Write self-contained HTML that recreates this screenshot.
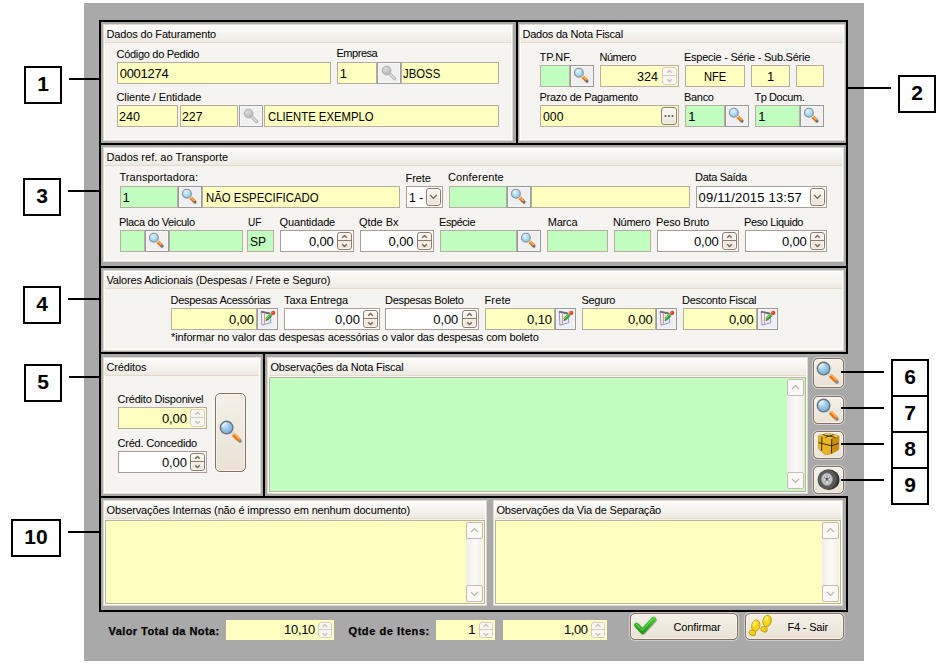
<!DOCTYPE html>
<html lang="pt-BR"><head><meta charset="utf-8"><title>Faturamento</title>
<style>
*{box-sizing:border-box;margin:0;padding:0}
html,body{width:942px;height:668px;overflow:hidden;background:#fff}
body{position:relative;font-family:"Liberation Sans",sans-serif;font-size:11px;color:#000}
.a{position:absolute}
#bg{left:84px;top:3px;width:780px;height:658px;background:#a9a9a9}
.k{position:absolute;background:#000}
.p{position:absolute;background:#f6f4f0;border:1px solid #e1d8c7;overflow:hidden}
.p:after{content:"";position:absolute;left:0;top:0;right:0;bottom:0;border:1px solid rgba(255,255,255,.85)}

.p .t{position:absolute;left:0;top:0;right:0;height:18px;background:linear-gradient(#fdfcfb,#f6f3ee 55%,#eeeae2);border-bottom:1px solid #e3dccb;padding-left:2.5px;line-height:18px;white-space:nowrap;font-size:11px;}
.l{position:absolute;white-space:nowrap;font-size:11px;line-height:13px;height:13px}
.f{position:absolute;height:22px;border:1px solid #b9ada3;font-size:13px;line-height:21px;padding-left:2px;white-space:nowrap;overflow:hidden}
.y{background:#ffffc0}.g{background:#c0ffc0}.w{background:#fff;border-color:#ab9d93}
.r{text-align:right}
.c{text-align:center;padding-left:0}
.sb{position:absolute;width:24px;height:22px;border:1px solid #989898;background:#efefef;box-shadow:inset 0 0 0 1px #f6f6f6}
.sb svg{position:absolute;left:0;top:0}
.sb.d{background:#f0f0f0;border-color:#a0a0a0}
.eb{position:absolute;width:21px;height:22px;border:1px solid #9a9a9a;background:#efefef;box-shadow:inset 0 0 0 1px #f6f6f6}
.eb svg{position:absolute;left:0;top:0}
.sp{position:absolute;width:15px;height:18px;border:1px solid #8f7b6d;border-radius:3px;background:linear-gradient(#faf8f3,#ece6d9);box-shadow:inset 0 0 0 1px rgba(255,255,255,.7)}
.sp:after{content:"";position:absolute;left:0;right:0;top:7px;height:1px;background:#8f7b6d}
.sp svg{position:absolute;left:0;top:0}
.sp.dis{border-color:#d3ccc2;background:#f8f6f2}
.sp.dis:after{background:#d3ccc2}
.sp[style*="height:16px"]:after{top:6px}
.dd{position:absolute;width:15px;height:18px;border:1px solid #8f7b6d;border-radius:3px;background:linear-gradient(#faf8f3,#e9e3d6);box-shadow:inset 0 0 0 1px rgba(255,255,255,.6)}
.dd svg{position:absolute;left:0;top:0}
.bb{position:absolute;border:1px solid #8a6e5e;border-radius:5px;background:linear-gradient(#f4f0e8,#e9e3d5);box-shadow:0 0 0 1px rgba(255,255,255,.42),inset 0 0 0 1px rgba(255,255,255,.5)}
.bb span{position:absolute;font-size:11px;line-height:13px;white-space:nowrap}
.nb{position:absolute;background:#fff;border:2px solid #000;font-family:"Liberation Sans",sans-serif;font-weight:bold;font-size:21px;text-align:center;color:#000}
.ln{position:absolute;height:2px;background:#000}
.ta{position:absolute;border:1px solid #bdb1a7}
.sc{position:absolute;width:17px;background:linear-gradient(90deg,#f0ede8,#fbfaf8 50%,#f3f0ea)}
.sc i{position:absolute;left:0;width:17px;height:17px;border:1px solid #c6b9b0;border-radius:2px;background:#faf9f7}
.sc i svg{position:absolute;left:0;top:0}
.bl{position:absolute;font-weight:bold;font-size:11px;white-space:nowrap;line-height:13px;-webkit-text-stroke:.25px #000}
</style></head>
<body>
<div class="a" id="bg"></div>
<div class="k" style="left:99px;top:20px;width:749px;height:2px"></div>
<div class="k" style="left:99px;top:143px;width:749px;height:2px"></div>
<div class="k" style="left:99px;top:266px;width:749px;height:2px"></div>
<div class="k" style="left:99px;top:352px;width:749px;height:2px"></div>
<div class="k" style="left:99px;top:496px;width:749px;height:2px"></div>
<div class="k" style="left:99px;top:610px;width:749px;height:2px"></div>
<div class="k" style="left:99px;top:20px;width:2px;height:592px"></div>
<div class="k" style="left:846px;top:20px;width:2px;height:334px"></div>
<div class="k" style="left:846px;top:496px;width:2px;height:116px"></div>
<div class="k" style="left:516px;top:20px;width:2px;height:125px"></div>
<div class="k" style="left:263px;top:352px;width:2px;height:146px"></div>
<div class="p" style="left:103px;top:24px;width:410px;height:117px"><div class="t"><span id="t1" style="letter-spacing:-0.148px">Dados do Faturamento</span></div></div>
<div class="l" style="left:116.5px;top:48px"><span id="t2" style="letter-spacing:-0.298px">Código do Pedido</span></div>
<div class="f y" style="left:117px;top:62px;width:214px;;padding-left:1.7px"><span id="t3" style="letter-spacing:-0.271px">0001274</span></div>
<div class="l" style="left:336.5px;top:47px"><span id="t4" style="letter-spacing:-0.464px">Empresa</span></div>
<div class="f y" style="left:337px;top:62px;width:40px;;padding-left:1.8px"><span id="t5">1</span></div>
<div class="sb d" style="left:377px;top:62px"><svg width="22" height="20" viewBox="0 0 22 20"><defs><radialGradient id="mgd" cx="38%" cy="32%" r="75%"><stop offset="0" stop-color="#dcdcdc"/><stop offset="1" stop-color="#b2b2b2"/></radialGradient></defs><path d="M11.8 10.9 L16.6 15.7" stroke="#b4b4b4" stroke-width="3.2" stroke-linecap="round"/><path d="M12 11.1 L16.4 15.5" stroke="#dedede" stroke-width="1.4" stroke-linecap="round"/><circle cx="8.6" cy="7.5" r="4.4" fill="url(#mgd)" stroke="#b0b0b0" stroke-width="1"/></svg></div>
<div class="f y" style="left:401px;top:62px;width:98px;;padding-left:0.8px"><span id="t6" style="display:inline-block;transform:scaleX(0.8739);transform-origin:0 50%">JBOSS</span></div>
<div class="l" style="left:116.5px;top:91px"><span id="t7" style="letter-spacing:-0.123px">Cliente / Entidade</span></div>
<div class="f y" style="left:117px;top:105px;width:61px;;padding-left:1.3px"><span id="t8" style="display:inline-block;transform:scaleX(0.9676);transform-origin:0 50%">240</span></div>
<div class="f y" style="left:180px;top:105px;width:58px;;padding-left:1.3px"><span id="t9" style="display:inline-block;transform:scaleX(0.9446);transform-origin:0 50%">227</span></div>
<div class="sb d" style="left:239px;top:105px"><svg width="22" height="20" viewBox="0 0 22 20"><defs><radialGradient id="mgd" cx="38%" cy="32%" r="75%"><stop offset="0" stop-color="#dcdcdc"/><stop offset="1" stop-color="#b2b2b2"/></radialGradient></defs><path d="M11.8 10.9 L16.6 15.7" stroke="#b4b4b4" stroke-width="3.2" stroke-linecap="round"/><path d="M12 11.1 L16.4 15.5" stroke="#dedede" stroke-width="1.4" stroke-linecap="round"/><circle cx="8.6" cy="7.5" r="4.4" fill="url(#mgd)" stroke="#b0b0b0" stroke-width="1"/></svg></div>
<div class="f y" style="left:264px;top:105px;width:235px;;padding-left:2.5px"><span id="t10" style="display:inline-block;transform:scaleX(0.8692);transform-origin:0 50%">CLIENTE EXEMPLO</span></div>
<div class="p" style="left:519px;top:24px;width:326px;height:117px"><div class="t"><span id="t11" style="letter-spacing:-0.235px">Dados da Nota Fiscal</span></div></div>
<div class="l" style="left:539.5px;top:51px"><span id="t12" style="letter-spacing:0.059px">TP.NF.</span></div>
<div class="f g" style="left:540px;top:65px;width:30px;"></div>
<div class="sb" style="left:570px;top:65px"><svg width="22" height="20" viewBox="0 0 22 20"><defs><radialGradient id="mg1" cx="38%" cy="32%" r="75%"><stop offset="0" stop-color="#e4f4fe"/><stop offset=".55" stop-color="#a9daf6"/><stop offset="1" stop-color="#7fbfe8"/></radialGradient></defs><path d="M14.8 13.9 L16 15.1" stroke="#707070" stroke-width="3.2" stroke-linecap="round"/><path d="M11.2 10.3 L15.2 14.3" stroke="#e8741c" stroke-width="3.4"/><path d="M11.6 9.9 L15.6 13.9" stroke="#ffc050" stroke-width="1.1"/><path d="M10.6 9.7 L11.8 10.9" stroke="#f4f4f4" stroke-width="3"/><circle cx="7.9" cy="6.7" r="4.4" fill="url(#mg1)" stroke="#8a9097" stroke-width="1.1"/></svg></div>
<div class="l" style="left:599.5px;top:51px"><span id="t13" style="letter-spacing:-0.475px">Número</span></div>
<div class="f y r" style="left:600px;top:65px;width:79px;padding-right:19px;padding-right:19.2px"><span id="t14" style="display:inline-block;transform:scaleX(0.9676);transform-origin:0 50%">324</span></div>
<div class="sp dis" style="left:662px;top:67px"><svg width="13" height="16" viewBox="0 0 13 16"><path d="M4.2 4.8 L6.5 2.5 L8.8 4.8" fill="none" stroke="#c9c2b8" stroke-width="1.4"/><path d="M4.2 11.2 L6.5 13.5 L8.8 11.2" fill="none" stroke="#c9c2b8" stroke-width="1.4"/></svg></div>
<div class="l" style="left:684.0px;top:51px"><span id="t15" style="letter-spacing:-0.247px">Especie - Série - Sub.Série</span></div>
<div class="f y c" style="left:685px;top:65px;width:60px;"><span id="t16" style="display:inline-block;transform:scaleX(0.8538);transform-origin:50% 50%">NFE</span></div>
<div class="f y c" style="left:751px;top:65px;width:39px;"><span id="t17">1</span></div>
<div class="f y" style="left:796px;top:65px;width:28px;"></div>
<div class="l" style="left:539.5px;top:91px"><span id="t18" style="letter-spacing:-0.271px">Prazo de Pagamento</span></div>
<div class="f y" style="left:540px;top:105px;width:139px;;padding-left:2.0px"><span id="t19" style="display:inline-block;transform:scaleX(0.9446);transform-origin:0 50%">000</span></div>
<div class="dd" style="left:661px;top:107px;width:16px;height:18px"><svg width="14" height="16" viewBox="0 0 14 16"><circle cx="3.5" cy="8" r="1" fill="#555"/><circle cx="7" cy="8" r="1" fill="#555"/><circle cx="10.5" cy="8" r="1" fill="#555"/></svg></div>
<div class="l" style="left:684.0px;top:91px"><span id="t20" style="letter-spacing:-0.301px">Banco</span></div>
<div class="f g" style="left:685px;top:105px;width:40px;;padding-left:2.3px"><span id="t21">1</span></div>
<div class="sb" style="left:725px;top:105px"><svg width="22" height="20" viewBox="0 0 22 20"><defs><radialGradient id="mg2" cx="38%" cy="32%" r="75%"><stop offset="0" stop-color="#e4f4fe"/><stop offset=".55" stop-color="#a9daf6"/><stop offset="1" stop-color="#7fbfe8"/></radialGradient></defs><path d="M14.8 13.9 L16 15.1" stroke="#707070" stroke-width="3.2" stroke-linecap="round"/><path d="M11.2 10.3 L15.2 14.3" stroke="#e8741c" stroke-width="3.4"/><path d="M11.6 9.9 L15.6 13.9" stroke="#ffc050" stroke-width="1.1"/><path d="M10.6 9.7 L11.8 10.9" stroke="#f4f4f4" stroke-width="3"/><circle cx="7.9" cy="6.7" r="4.4" fill="url(#mg2)" stroke="#8a9097" stroke-width="1.1"/></svg></div>
<div class="l" style="left:754.5px;top:91px"><span id="t22" style="letter-spacing:-0.443px">Tp Docum.</span></div>
<div class="f g" style="left:755px;top:105px;width:45px;;padding-left:2.3px"><span id="t23">1</span></div>
<div class="sb" style="left:800px;top:105px"><svg width="22" height="20" viewBox="0 0 22 20"><defs><radialGradient id="mg3" cx="38%" cy="32%" r="75%"><stop offset="0" stop-color="#e4f4fe"/><stop offset=".55" stop-color="#a9daf6"/><stop offset="1" stop-color="#7fbfe8"/></radialGradient></defs><path d="M14.8 13.9 L16 15.1" stroke="#707070" stroke-width="3.2" stroke-linecap="round"/><path d="M11.2 10.3 L15.2 14.3" stroke="#e8741c" stroke-width="3.4"/><path d="M11.6 9.9 L15.6 13.9" stroke="#ffc050" stroke-width="1.1"/><path d="M10.6 9.7 L11.8 10.9" stroke="#f4f4f4" stroke-width="3"/><circle cx="7.9" cy="6.7" r="4.4" fill="url(#mg3)" stroke="#8a9097" stroke-width="1.1"/></svg></div>
<div class="p" style="left:103px;top:147px;width:741px;height:115px"><div class="t"><span id="t24" style="letter-spacing:0.001px">Dados ref. ao Transporte</span></div></div>
<div class="l" style="left:119.5px;top:171px"><span id="t25" style="letter-spacing:0.046px">Transportadora:</span></div>
<div class="f g" style="left:120px;top:186px;width:58px;;padding-left:1.6px"><span id="t26">1</span></div>
<div class="sb" style="left:178px;top:186px"><svg width="22" height="20" viewBox="0 0 22 20"><defs><radialGradient id="mg4" cx="38%" cy="32%" r="75%"><stop offset="0" stop-color="#e4f4fe"/><stop offset=".55" stop-color="#a9daf6"/><stop offset="1" stop-color="#7fbfe8"/></radialGradient></defs><path d="M14.8 13.9 L16 15.1" stroke="#707070" stroke-width="3.2" stroke-linecap="round"/><path d="M11.2 10.3 L15.2 14.3" stroke="#e8741c" stroke-width="3.4"/><path d="M11.6 9.9 L15.6 13.9" stroke="#ffc050" stroke-width="1.1"/><path d="M10.6 9.7 L11.8 10.9" stroke="#f4f4f4" stroke-width="3"/><circle cx="7.9" cy="6.7" r="4.4" fill="url(#mg4)" stroke="#8a9097" stroke-width="1.1"/></svg></div>
<div class="f y" style="left:202px;top:186px;width:198px;;padding-left:2.6px"><span id="t27" style="display:inline-block;transform:scaleX(0.8765);transform-origin:0 50%">NÃO ESPECIFICADO</span></div>
<div class="l" style="left:405.5px;top:172px"><span id="t28" style="letter-spacing:-0.047px">Frete</span></div>
<div class="f w" style="left:406px;top:186px;width:37px;;padding-left:2.0px"><span id="t29" style="display:inline-block;transform:scaleX(0.9392);transform-origin:0 50%">1 -</span></div>
<div class="dd" style="left:426px;top:188px"><svg width="13" height="16" viewBox="0 0 13 16"><path d="M3.2 6 L6.5 9.4 L9.8 6" fill="none" stroke="#7a6658" stroke-width="1.3"/></svg></div>
<div class="l" style="left:448.0px;top:171px"><span id="t30" style="letter-spacing:0.146px">Conferente</span></div>
<div class="f g" style="left:449px;top:186px;width:58px;"></div>
<div class="sb" style="left:507px;top:186px"><svg width="22" height="20" viewBox="0 0 22 20"><defs><radialGradient id="mg5" cx="38%" cy="32%" r="75%"><stop offset="0" stop-color="#e4f4fe"/><stop offset=".55" stop-color="#a9daf6"/><stop offset="1" stop-color="#7fbfe8"/></radialGradient></defs><path d="M14.8 13.9 L16 15.1" stroke="#707070" stroke-width="3.2" stroke-linecap="round"/><path d="M11.2 10.3 L15.2 14.3" stroke="#e8741c" stroke-width="3.4"/><path d="M11.6 9.9 L15.6 13.9" stroke="#ffc050" stroke-width="1.1"/><path d="M10.6 9.7 L11.8 10.9" stroke="#f4f4f4" stroke-width="3"/><circle cx="7.9" cy="6.7" r="4.4" fill="url(#mg5)" stroke="#8a9097" stroke-width="1.1"/></svg></div>
<div class="f y" style="left:531px;top:186px;width:159px;"></div>
<div class="l" style="left:695.0px;top:171px"><span id="t31" style="letter-spacing:-0.311px">Data Saída</span></div>
<div class="f w" style="left:696px;top:186px;width:131px;;padding-left:1.6px"><span id="t32" style="letter-spacing:0.200px">09/11/2015 13:57</span></div>
<div class="dd" style="left:810px;top:188px"><svg width="13" height="16" viewBox="0 0 13 16"><path d="M3.2 6 L6.5 9.4 L9.8 6" fill="none" stroke="#7a6658" stroke-width="1.3"/></svg></div>
<div class="l" style="left:119.0px;top:216px"><span id="t33" style="letter-spacing:-0.356px">Placa do Veiculo</span></div>
<div class="f g" style="left:120px;top:230px;width:25px;"></div>
<div class="sb" style="left:145px;top:230px"><svg width="22" height="20" viewBox="0 0 22 20"><defs><radialGradient id="mg6" cx="38%" cy="32%" r="75%"><stop offset="0" stop-color="#e4f4fe"/><stop offset=".55" stop-color="#a9daf6"/><stop offset="1" stop-color="#7fbfe8"/></radialGradient></defs><path d="M14.8 13.9 L16 15.1" stroke="#707070" stroke-width="3.2" stroke-linecap="round"/><path d="M11.2 10.3 L15.2 14.3" stroke="#e8741c" stroke-width="3.4"/><path d="M11.6 9.9 L15.6 13.9" stroke="#ffc050" stroke-width="1.1"/><path d="M10.6 9.7 L11.8 10.9" stroke="#f4f4f4" stroke-width="3"/><circle cx="7.9" cy="6.7" r="4.4" fill="url(#mg6)" stroke="#8a9097" stroke-width="1.1"/></svg></div>
<div class="f g" style="left:169px;top:230px;width:74px;"></div>
<div class="l" style="left:248.0px;top:216px"><span id="t34" style="display:inline-block;transform:scaleX(0.9201);transform-origin:0 50%">UF</span></div>
<div class="f g" style="left:247px;top:230px;width:27px;;padding-left:1.8px"><span id="t35" style="display:inline-block;transform:scaleX(0.9225);transform-origin:0 50%">SP</span></div>
<div class="l" style="left:279.5px;top:216px"><span id="t36" style="letter-spacing:-0.127px">Quantidade</span></div>
<div class="f w r" style="left:280px;top:230px;width:74px;padding-right:19px;padding-right:19.5px"><span id="t37" style="letter-spacing:-0.188px">0,00</span></div>
<div class="sp" style="left:337px;top:232px"><svg width="13" height="16" viewBox="0 0 13 16"><path d="M4.2 4.8 L6.5 2.5 L8.8 4.8" fill="none" stroke="#7a6658" stroke-width="1.4"/><path d="M4.2 11.2 L6.5 13.5 L8.8 11.2" fill="none" stroke="#7a6658" stroke-width="1.4"/></svg></div>
<div class="l" style="left:359.0px;top:216px"><span id="t38" style="letter-spacing:-0.042px">Qtde Bx</span></div>
<div class="f w r" style="left:360px;top:230px;width:74px;padding-right:19px;padding-right:19.5px"><span id="t39" style="letter-spacing:-0.104px">0,00</span></div>
<div class="sp" style="left:417px;top:232px"><svg width="13" height="16" viewBox="0 0 13 16"><path d="M4.2 4.8 L6.5 2.5 L8.8 4.8" fill="none" stroke="#7a6658" stroke-width="1.4"/><path d="M4.2 11.2 L6.5 13.5 L8.8 11.2" fill="none" stroke="#7a6658" stroke-width="1.4"/></svg></div>
<div class="l" style="left:439.0px;top:216px"><span id="t40" style="letter-spacing:-0.440px">Espécie</span></div>
<div class="f g" style="left:440px;top:230px;width:77px;"></div>
<div class="sb" style="left:517px;top:230px"><svg width="22" height="20" viewBox="0 0 22 20"><defs><radialGradient id="mg7" cx="38%" cy="32%" r="75%"><stop offset="0" stop-color="#e4f4fe"/><stop offset=".55" stop-color="#a9daf6"/><stop offset="1" stop-color="#7fbfe8"/></radialGradient></defs><path d="M14.8 13.9 L16 15.1" stroke="#707070" stroke-width="3.2" stroke-linecap="round"/><path d="M11.2 10.3 L15.2 14.3" stroke="#e8741c" stroke-width="3.4"/><path d="M11.6 9.9 L15.6 13.9" stroke="#ffc050" stroke-width="1.1"/><path d="M10.6 9.7 L11.8 10.9" stroke="#f4f4f4" stroke-width="3"/><circle cx="7.9" cy="6.7" r="4.4" fill="url(#mg7)" stroke="#8a9097" stroke-width="1.1"/></svg></div>
<div class="l" style="left:547.75px;top:216px"><span id="t41" style="letter-spacing:-0.203px">Marca</span></div>
<div class="f g" style="left:547px;top:230px;width:61px;"></div>
<div class="l" style="left:613.0px;top:216px"><span id="t42" style="letter-spacing:-0.325px">Número</span></div>
<div class="f g" style="left:614px;top:230px;width:37px;"></div>
<div class="l" style="left:656.0px;top:216px"><span id="t43" style="letter-spacing:-0.158px">Peso Bruto</span></div>
<div class="f w r" style="left:657px;top:230px;width:82px;padding-right:19px;padding-right:19.5px"><span id="t44" style="letter-spacing:-0.188px">0,00</span></div>
<div class="sp" style="left:722px;top:232px"><svg width="13" height="16" viewBox="0 0 13 16"><path d="M4.2 4.8 L6.5 2.5 L8.8 4.8" fill="none" stroke="#7a6658" stroke-width="1.4"/><path d="M4.2 11.2 L6.5 13.5 L8.8 11.2" fill="none" stroke="#7a6658" stroke-width="1.4"/></svg></div>
<div class="l" style="left:744.0px;top:216px"><span id="t45" style="letter-spacing:-0.374px">Peso Liquido</span></div>
<div class="f w r" style="left:745px;top:230px;width:82px;padding-right:19px;padding-right:19.5px"><span id="t46" style="letter-spacing:-0.188px">0,00</span></div>
<div class="sp" style="left:810px;top:232px"><svg width="13" height="16" viewBox="0 0 13 16"><path d="M4.2 4.8 L6.5 2.5 L8.8 4.8" fill="none" stroke="#7a6658" stroke-width="1.4"/><path d="M4.2 11.2 L6.5 13.5 L8.8 11.2" fill="none" stroke="#7a6658" stroke-width="1.4"/></svg></div>
<div class="p" style="left:103px;top:270px;width:741px;height:81px"><div class="t"><span id="t47" style="letter-spacing:-0.155px">Valores Adicionais (Despesas / Frete e Seguro)</span></div></div>
<div class="l" style="left:170.5px;top:294px"><span id="t48" style="letter-spacing:-0.273px">Despesas Acessórias</span></div>
<div class="f y r" style="left:171px;top:308px;width:86px;;padding-right:2.0px"><span id="t49" style="letter-spacing:-0.104px">0,00</span></div>
<div class="eb" style="left:257px;top:308px"><svg width="19" height="20" viewBox="0 0 19 20"><path d="M3.2 2.9 L11.6 4.6 L12.9 13.6 L4 16.1 Z" fill="#f2f6fd" stroke="#8c92cc" stroke-width="1"/><path d="M8 5 L11.2 5.6 L12.2 13 L8 14.2 Z" fill="#dfe9f8"/><path d="M3.1 2.7 L11.8 4.5" stroke="#6c6c74" stroke-width="1.8"/><path d="M6.4 4.4 L6.4 14.8" stroke="#f08060" stroke-width="1"/><path d="M8.6 10.4 L13 5.8" stroke="#2e9a2e" stroke-width="3.4"/><path d="M8.4 9.6 L12.6 5.2" stroke="#7fe06a" stroke-width="1.2"/><path d="M7.6 11.9 L8.2 10 L9.6 11.2 Z" fill="#4a3a2a"/><path d="M13 5.8 L14 4.8" stroke="#9a9a9a" stroke-width="3"/><circle cx="15.2" cy="3.9" r="2.1" fill="#e8401c"/><circle cx="14.7" cy="3.3" r=".8" fill="#ff8a60"/></svg></div>
<div class="l" style="left:284.0px;top:294px"><span id="t50" style="letter-spacing:-0.053px">Taxa Entrega</span></div>
<div class="f w r" style="left:284px;top:308px;width:96px;padding-right:19px;padding-right:19.2px"><span id="t51" style="letter-spacing:-0.104px">0,00</span></div>
<div class="sp" style="left:363px;top:310px"><svg width="13" height="16" viewBox="0 0 13 16"><path d="M4.2 4.8 L6.5 2.5 L8.8 4.8" fill="none" stroke="#7a6658" stroke-width="1.4"/><path d="M4.2 11.2 L6.5 13.5 L8.8 11.2" fill="none" stroke="#7a6658" stroke-width="1.4"/></svg></div>
<div class="l" style="left:385.0px;top:294px"><span id="t52" style="letter-spacing:-0.298px">Despesas Boleto</span></div>
<div class="f w r" style="left:385px;top:308px;width:94px;padding-right:19px;padding-right:19.8px"><span id="t53" style="letter-spacing:-0.104px">0,00</span></div>
<div class="sp" style="left:462px;top:310px"><svg width="13" height="16" viewBox="0 0 13 16"><path d="M4.2 4.8 L6.5 2.5 L8.8 4.8" fill="none" stroke="#7a6658" stroke-width="1.4"/><path d="M4.2 11.2 L6.5 13.5 L8.8 11.2" fill="none" stroke="#7a6658" stroke-width="1.4"/></svg></div>
<div class="l" style="left:484.5px;top:294px"><span id="t54" style="letter-spacing:0.141px">Frete</span></div>
<div class="f y r" style="left:485px;top:308px;width:70px;;padding-right:2.0px"><span id="t55" style="letter-spacing:-0.104px">0,10</span></div>
<div class="eb" style="left:555px;top:308px"><svg width="19" height="20" viewBox="0 0 19 20"><path d="M3.2 2.9 L11.6 4.6 L12.9 13.6 L4 16.1 Z" fill="#f2f6fd" stroke="#8c92cc" stroke-width="1"/><path d="M8 5 L11.2 5.6 L12.2 13 L8 14.2 Z" fill="#dfe9f8"/><path d="M3.1 2.7 L11.8 4.5" stroke="#6c6c74" stroke-width="1.8"/><path d="M6.4 4.4 L6.4 14.8" stroke="#f08060" stroke-width="1"/><path d="M8.6 10.4 L13 5.8" stroke="#2e9a2e" stroke-width="3.4"/><path d="M8.4 9.6 L12.6 5.2" stroke="#7fe06a" stroke-width="1.2"/><path d="M7.6 11.9 L8.2 10 L9.6 11.2 Z" fill="#4a3a2a"/><path d="M13 5.8 L14 4.8" stroke="#9a9a9a" stroke-width="3"/><circle cx="15.2" cy="3.9" r="2.1" fill="#e8401c"/><circle cx="14.7" cy="3.3" r=".8" fill="#ff8a60"/></svg></div>
<div class="l" style="left:581.5px;top:294px"><span id="t56" style="letter-spacing:-0.297px">Seguro</span></div>
<div class="f y r" style="left:582px;top:308px;width:74px;;padding-right:2.5px"><span id="t57" style="letter-spacing:-0.188px">0,00</span></div>
<div class="eb" style="left:656px;top:308px"><svg width="19" height="20" viewBox="0 0 19 20"><path d="M3.2 2.9 L11.6 4.6 L12.9 13.6 L4 16.1 Z" fill="#f2f6fd" stroke="#8c92cc" stroke-width="1"/><path d="M8 5 L11.2 5.6 L12.2 13 L8 14.2 Z" fill="#dfe9f8"/><path d="M3.1 2.7 L11.8 4.5" stroke="#6c6c74" stroke-width="1.8"/><path d="M6.4 4.4 L6.4 14.8" stroke="#f08060" stroke-width="1"/><path d="M8.6 10.4 L13 5.8" stroke="#2e9a2e" stroke-width="3.4"/><path d="M8.4 9.6 L12.6 5.2" stroke="#7fe06a" stroke-width="1.2"/><path d="M7.6 11.9 L8.2 10 L9.6 11.2 Z" fill="#4a3a2a"/><path d="M13 5.8 L14 4.8" stroke="#9a9a9a" stroke-width="3"/><circle cx="15.2" cy="3.9" r="2.1" fill="#e8401c"/><circle cx="14.7" cy="3.3" r=".8" fill="#ff8a60"/></svg></div>
<div class="l" style="left:682.0px;top:294px"><span id="t58" style="letter-spacing:-0.269px">Desconto Fiscal</span></div>
<div class="f y r" style="left:683px;top:308px;width:74px;;padding-right:2.5px"><span id="t59" style="letter-spacing:-0.188px">0,00</span></div>
<div class="eb" style="left:757px;top:308px"><svg width="19" height="20" viewBox="0 0 19 20"><path d="M3.2 2.9 L11.6 4.6 L12.9 13.6 L4 16.1 Z" fill="#f2f6fd" stroke="#8c92cc" stroke-width="1"/><path d="M8 5 L11.2 5.6 L12.2 13 L8 14.2 Z" fill="#dfe9f8"/><path d="M3.1 2.7 L11.8 4.5" stroke="#6c6c74" stroke-width="1.8"/><path d="M6.4 4.4 L6.4 14.8" stroke="#f08060" stroke-width="1"/><path d="M8.6 10.4 L13 5.8" stroke="#2e9a2e" stroke-width="3.4"/><path d="M8.4 9.6 L12.6 5.2" stroke="#7fe06a" stroke-width="1.2"/><path d="M7.6 11.9 L8.2 10 L9.6 11.2 Z" fill="#4a3a2a"/><path d="M13 5.8 L14 4.8" stroke="#9a9a9a" stroke-width="3"/><circle cx="15.2" cy="3.9" r="2.1" fill="#e8401c"/><circle cx="14.7" cy="3.3" r=".8" fill="#ff8a60"/></svg></div>
<div class="l" style="left:171.0px;top:331px"><span id="t60" style="letter-spacing:-0.130px">*informar no valor das despesas acessórias o valor das despesas com boleto</span></div>
<div class="p" style="left:103px;top:357px;width:158px;height:137px"><div class="t"><span id="t61" style="letter-spacing:-0.146px">Créditos</span></div></div>
<div class="l" style="left:117.5px;top:393px"><span id="t62" style="letter-spacing:-0.192px">Crédito Disponivel</span></div>
<div class="f y r" style="left:118px;top:407px;width:89px;padding-right:19px;padding-right:19.2px"><span id="t63" style="letter-spacing:-0.104px">0,00</span></div>
<div class="sp dis" style="left:190px;top:409px"><svg width="13" height="16" viewBox="0 0 13 16"><path d="M4.2 4.8 L6.5 2.5 L8.8 4.8" fill="none" stroke="#c9c2b8" stroke-width="1.4"/><path d="M4.2 11.2 L6.5 13.5 L8.8 11.2" fill="none" stroke="#c9c2b8" stroke-width="1.4"/></svg></div>
<div class="l" style="left:117.5px;top:437px"><span id="t64" style="letter-spacing:-0.201px">Créd. Concedido</span></div>
<div class="f w r" style="left:118px;top:451px;width:89px;padding-right:19px;padding-right:19.2px"><span id="t65" style="letter-spacing:-0.104px">0,00</span></div>
<div class="sp" style="left:190px;top:453px"><svg width="13" height="16" viewBox="0 0 13 16"><path d="M4.2 4.8 L6.5 2.5 L8.8 4.8" fill="none" stroke="#7a6658" stroke-width="1.4"/><path d="M4.2 11.2 L6.5 13.5 L8.8 11.2" fill="none" stroke="#7a6658" stroke-width="1.4"/></svg></div>
<div class="bb" style="left:215px;top:393px;width:31px;height:79px"><svg style="position:absolute;left:2.5px;top:25.5px" width="24" height="24" viewBox="0 0 24 24"><defs><radialGradient id="mg8" cx="36%" cy="30%" r="80%"><stop offset="0" stop-color="#d6ebfa"/><stop offset=".5" stop-color="#94c6e8"/><stop offset="1" stop-color="#6aa6d2"/></radialGradient></defs><path d="M19.6 19.6 L21 21" stroke="#8a8a8a" stroke-width="3.6" stroke-linecap="round"/><path d="M14.2 14.2 L20 20" stroke="#ee7416" stroke-width="4.2"/><path d="M14.9 13.5 L20.7 19.3" stroke="#ffc04e" stroke-width="1.3"/><path d="M12.4 12.4 L14.4 14.4" stroke="#d8d8d8" stroke-width="3.8"/><circle cx="7.6" cy="7.6" r="6.3" fill="url(#mg8)" stroke="#6c747c" stroke-width="1.4"/><path d="M3.6 6.6 A4.4 4.4 0 0 1 7 3.2" fill="none" stroke="#f4fbff" stroke-width="1.2" stroke-linecap="round" opacity=".8"/></svg></div>
<div class="p" style="left:267px;top:357px;width:541px;height:137px"><div class="t"><span id="t66" style="letter-spacing:-0.199px">Observações da Nota Fiscal</span></div></div>
<div class="ta g" style="left:269px;top:377px;width:537px;height:115px"></div>
<div class="sc" style="left:787px;top:379px;height:110px"><i style="top:0"><svg width="15" height="15" viewBox="0 0 15 15"><path d="M4 9 L7.5 5.5 L11 9" fill="none" stroke="#b8b2a8" stroke-width="1.1"/></svg></i><i style="bottom:0"><svg width="15" height="15" viewBox="0 0 15 15"><path d="M4 6 L7.5 9.5 L11 6" fill="none" stroke="#b8b2a8" stroke-width="1.1"/></svg></i></div>
<div class="bb" style="left:813px;top:358px;width:31px;height:30px"><svg style="position:absolute;left:2.4px;top:2.4px" width="24" height="24" viewBox="0 0 24 24"><defs><radialGradient id="mg9" cx="36%" cy="30%" r="80%"><stop offset="0" stop-color="#d6ebfa"/><stop offset=".5" stop-color="#94c6e8"/><stop offset="1" stop-color="#6aa6d2"/></radialGradient></defs><path d="M19.6 19.6 L21 21" stroke="#8a8a8a" stroke-width="3.6" stroke-linecap="round"/><path d="M14.2 14.2 L20 20" stroke="#ee7416" stroke-width="4.2"/><path d="M14.9 13.5 L20.7 19.3" stroke="#ffc04e" stroke-width="1.3"/><path d="M12.4 12.4 L14.4 14.4" stroke="#d8d8d8" stroke-width="3.8"/><circle cx="7.6" cy="7.6" r="6.3" fill="url(#mg9)" stroke="#6c747c" stroke-width="1.4"/><path d="M3.6 6.6 A4.4 4.4 0 0 1 7 3.2" fill="none" stroke="#f4fbff" stroke-width="1.2" stroke-linecap="round" opacity=".8"/></svg></div>
<div class="bb" style="left:813px;top:396px;width:31px;height:28px"><svg style="position:absolute;left:2.4px;top:1px" width="24" height="24" viewBox="0 0 24 24"><defs><radialGradient id="mg10" cx="36%" cy="30%" r="80%"><stop offset="0" stop-color="#d6ebfa"/><stop offset=".5" stop-color="#94c6e8"/><stop offset="1" stop-color="#6aa6d2"/></radialGradient></defs><path d="M19.6 19.6 L21 21" stroke="#8a8a8a" stroke-width="3.6" stroke-linecap="round"/><path d="M14.2 14.2 L20 20" stroke="#ee7416" stroke-width="4.2"/><path d="M14.9 13.5 L20.7 19.3" stroke="#ffc04e" stroke-width="1.3"/><path d="M12.4 12.4 L14.4 14.4" stroke="#d8d8d8" stroke-width="3.8"/><circle cx="7.6" cy="7.6" r="6.3" fill="url(#mg10)" stroke="#6c747c" stroke-width="1.4"/><path d="M3.6 6.6 A4.4 4.4 0 0 1 7 3.2" fill="none" stroke="#f4fbff" stroke-width="1.2" stroke-linecap="round" opacity=".8"/></svg></div>
<div class="bb" style="left:813px;top:431px;width:31px;height:28px"><svg style="position:absolute;left:0;top:0" width="31" height="28" viewBox="0 0 31 28"><g transform="translate(-1,-1)" stroke-linejoin="round"><path d="M5.4 5.2 Q5.2 4.4 6.4 4.2 L14.6 2.4 Q15.4 2.2 16.4 2.5 L25.2 4.6 Q26.2 4.9 26.1 5.8 L25.7 17.8 Q25.6 18.8 24.8 19.2 L19.4 22.2 Q18.4 22.8 17.4 22.9 L13.2 23.6 Q12.2 23.7 11.4 23 L6.3 18.4 Q5.7 17.8 5.7 17 Z" fill="#d49a10" stroke="#b07c08" stroke-width=".6"/><path d="M5.5 4.8 L15.3 2.4 L26 5 L18.8 7.8 Z" fill="#f6d248"/><path d="M5.5 4.8 L18.8 7.8 L18.3 22.6 L12.4 23.6 L5.8 17.6 Z" fill="#eab420"/><path d="M18.8 7.8 L26 5 L25.6 18.4 L18.3 22.6 Z" fill="#c98e0c"/><g fill="none" stroke="#2a2208" stroke-width=".9"><path d="M8.9 5.6 L8.6 19.8"/><path d="M5.5 11.6 L18.6 14.8 L25.8 12.3"/><path d="M18.8 7.8 L18.4 22.4"/><path d="M10 3.8 L22.4 6.5"/><path d="M20.6 3.7 L12.2 6.4"/></g></g></svg></div>
<div class="bb" style="left:813px;top:466px;width:31px;height:28px"><svg style="position:absolute;left:0;top:0" width="31" height="28" viewBox="0 0 31 28"><defs><radialGradient id="tg" cx="42%" cy="45%" r="60%"><stop offset="0" stop-color="#6a6a6a"/><stop offset=".7" stop-color="#4a4a4a"/><stop offset="1" stop-color="#2c2c2c"/></radialGradient></defs><g transform="translate(-1,-1)"><ellipse cx="15.6" cy="13.7" rx="10.9" ry="10.4" fill="url(#tg)"/><ellipse cx="14.2" cy="13.4" rx="8.2" ry="9.2" fill="#555" stroke="#6e6e6e" stroke-width=".6"/><ellipse cx="14" cy="13.3" rx="5.6" ry="6.4" fill="#c4c4c4" stroke="#8c8c8c" stroke-width=".8"/><ellipse cx="14" cy="13.3" rx="3.4" ry="4" fill="#e4e4e4" stroke="#9a9a9a" stroke-width=".5"/><g stroke="#6a6a6a" stroke-width=".9"><path d="M14 13.3 L14 9.6"/><path d="M14 13.3 L17 11.4"/><path d="M14 13.3 L16.4 16"/><path d="M14 13.3 L11.8 16.2"/><path d="M14 13.3 L11 11.4"/></g><ellipse cx="14" cy="13.3" rx="1.2" ry="1.4" fill="#555"/></g></svg></div>
<div class="p" style="left:103px;top:500px;width:384px;height:106px"><div class="t"><span id="t67" style="letter-spacing:-0.145px">Observações Internas (não é impresso em nenhum documento)</span></div></div>
<div class="ta y" style="left:105px;top:520px;width:380px;height:84px"></div>
<div class="sc" style="left:466px;top:522px;height:80px"><i style="top:0"><svg width="15" height="15" viewBox="0 0 15 15"><path d="M4 9 L7.5 5.5 L11 9" fill="none" stroke="#b8b2a8" stroke-width="1.1"/></svg></i><i style="bottom:0"><svg width="15" height="15" viewBox="0 0 15 15"><path d="M4 6 L7.5 9.5 L11 6" fill="none" stroke="#b8b2a8" stroke-width="1.1"/></svg></i></div>
<div class="p" style="left:493px;top:500px;width:350px;height:106px"><div class="t"><span id="t68" style="letter-spacing:-0.191px">Observações da Via de Separação</span></div></div>
<div class="ta y" style="left:495px;top:520px;width:346px;height:84px"></div>
<div class="sc" style="left:822px;top:522px;height:80px"><i style="top:0"><svg width="15" height="15" viewBox="0 0 15 15"><path d="M4 9 L7.5 5.5 L11 9" fill="none" stroke="#b8b2a8" stroke-width="1.1"/></svg></i><i style="bottom:0"><svg width="15" height="15" viewBox="0 0 15 15"><path d="M4 6 L7.5 9.5 L11 6" fill="none" stroke="#b8b2a8" stroke-width="1.1"/></svg></i></div>
<div class="bl" style="left:108.5px;top:625px"><span id="t69" style="letter-spacing:0.435px">Valor Total da Nota:</span></div>
<div class="f y r" style="left:226px;top:620px;width:108px;border:0;height:20px;line-height:20px;padding-right:19.0px"><span id="t70" style="letter-spacing:-0.324px">10,10</span></div>
<div class="sp dis" style="left:318px;top:622px;height:16px;width:14px"><svg width="12" height="14" viewBox="0.5 1 12 14"><path d="M4.2 4.8 L6.5 2.5 L8.8 4.8" fill="none" stroke="#c9c2b8" stroke-width="1.3"/><path d="M4.2 11.2 L6.5 13.5 L8.8 11.2" fill="none" stroke="#c9c2b8" stroke-width="1.3"/></svg></div>
<div class="bl" style="left:348.5px;top:625px"><span id="t71" style="letter-spacing:0.570px">Qtde de Itens:</span></div>
<div class="f y r" style="left:436px;top:620px;width:59px;border:0;height:20px;line-height:20px;padding-right:19.5px"><span id="t72">1</span></div>
<div class="sp dis" style="left:479px;top:622px;height:16px;width:14px"><svg width="12" height="14" viewBox="0.5 1 12 14"><path d="M4.2 4.8 L6.5 2.5 L8.8 4.8" fill="none" stroke="#c9c2b8" stroke-width="1.3"/><path d="M4.2 11.2 L6.5 13.5 L8.8 11.2" fill="none" stroke="#c9c2b8" stroke-width="1.3"/></svg></div>
<div class="f y r" style="left:503px;top:620px;width:104px;border:0;height:20px;line-height:20px;padding-right:19.5px"><span id="t73" style="letter-spacing:-0.438px">1,00</span></div>
<div class="sp dis" style="left:591px;top:622px;height:16px;width:14px"><svg width="12" height="14" viewBox="0.5 1 12 14"><path d="M4.2 4.8 L6.5 2.5 L8.8 4.8" fill="none" stroke="#c9c2b8" stroke-width="1.3"/><path d="M4.2 11.2 L6.5 13.5 L8.8 11.2" fill="none" stroke="#c9c2b8" stroke-width="1.3"/></svg></div>
<div class="bb" style="left:630px;top:613px;width:108px;height:27px"><svg style="position:absolute;left:-1px;top:-1px" width="32" height="27" viewBox="0 0 32 27"><defs><linearGradient id="ck" x1="0" y1="0" x2="0" y2="1"><stop offset="0" stop-color="#4cc83a"/><stop offset="1" stop-color="#1f9a14"/></linearGradient></defs><path d="M7.3 12.9 L13.1 19.2 L24.2 7" fill="none" stroke="#5a6a50" stroke-opacity=".55" stroke-width="5.2" stroke-linecap="round" stroke-linejoin="round"/><path d="M6.5 12.1 L12.4 18.4 L23.5 6.2" fill="none" stroke="url(#ck)" stroke-width="5" stroke-linecap="round" stroke-linejoin="round"/><path d="M6.3 11.3 L12.3 17.4 L23 5.6" fill="none" stroke="#8ae878" stroke-opacity=".55" stroke-width="1.2" stroke-linecap="round" stroke-linejoin="round"/></svg><span style="left:42.5px;top:7px"><span id="t74" style="letter-spacing:-0.131px">Confirmar</span></span></div>
<div class="bb" style="left:745px;top:613px;width:99px;height:27px"><svg style="position:absolute;left:-1px;top:-1px" width="32" height="27" viewBox="0 0 32 27"><g fill="#6a5a10" fill-opacity=".5"><ellipse cx="10.9" cy="12.9" rx="3.9" ry="5.6" transform="rotate(14 10.9 12.9)"/><ellipse cx="8" cy="20.7" rx="3" ry="2.3" transform="rotate(14 8 20.7)"/><ellipse cx="22.6" cy="8.2" rx="3.9" ry="5.6" transform="rotate(14 22.6 8.2)"/><ellipse cx="19.6" cy="17" rx="3" ry="2.3" transform="rotate(14 19.6 17)"/></g><g fill="#f6d414" stroke="#c09a04" stroke-width=".8"><ellipse cx="10.8" cy="12.6" rx="4.1" ry="5.7" transform="rotate(14 10.8 12.6)"/><ellipse cx="7.3" cy="19.7" rx="3.3" ry="2.6" transform="rotate(14 7.3 19.7)"/><ellipse cx="22" cy="7.8" rx="4.1" ry="5.7" transform="rotate(14 22 7.8)"/><ellipse cx="19" cy="16.2" rx="3.3" ry="2.6" transform="rotate(14 19 16.2)"/></g><g fill="#fff27a" fill-opacity=".8"><ellipse cx="9.6" cy="10.6" rx="1.8" ry="3" transform="rotate(14 9.6 10.6)"/><ellipse cx="21.3" cy="5.9" rx="1.8" ry="3" transform="rotate(14 21.3 5.9)"/></g></svg><span style="left:41.5px;top:7px"><span id="t75" style="letter-spacing:-0.186px">F4 - Sair</span></span></div>
<div class="nb" style="left:24px;top:66px;width:38px;height:38px;line-height:32px">1</div>
<div class="ln" style="left:69px;top:78px;width:30px"></div>
<div class="nb" style="left:898px;top:75px;width:38px;height:38px;line-height:32px">2</div>
<div class="ln" style="left:848px;top:87px;width:43px"></div>
<div class="nb" style="left:23px;top:178px;width:38px;height:38px;line-height:32px">3</div>
<div class="ln" style="left:68px;top:190px;width:31px"></div>
<div class="nb" style="left:23px;top:286px;width:38px;height:38px;line-height:32px">4</div>
<div class="ln" style="left:68px;top:298px;width:31px"></div>
<div class="nb" style="left:24px;top:364px;width:38px;height:38px;line-height:32px">5</div>
<div class="ln" style="left:69px;top:376px;width:30px"></div>
<div class="nb" style="left:891px;top:359px;width:38px;height:38px;line-height:32px">6</div>
<div class="ln" style="left:841px;top:371px;width:43px"></div>
<div class="nb" style="left:891px;top:395px;width:38px;height:38px;line-height:32px">7</div>
<div class="ln" style="left:841px;top:407px;width:43px"></div>
<div class="nb" style="left:891px;top:431px;width:38px;height:38px;line-height:32px">8</div>
<div class="ln" style="left:841px;top:443px;width:43px"></div>
<div class="nb" style="left:891px;top:467px;width:38px;height:38px;line-height:32px">9</div>
<div class="ln" style="left:841px;top:479px;width:43px"></div>
<div class="nb" style="left:11px;top:519px;width:50px;height:38px;line-height:32px">10</div>
<div class="ln" style="left:68px;top:531px;width:31px"></div>
</body></html>
